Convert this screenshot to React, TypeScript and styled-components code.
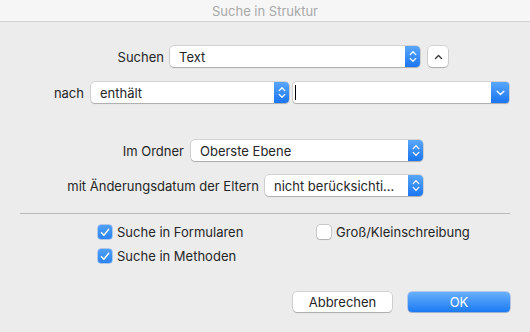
import React from "react";
import styled, { createGlobalStyle } from "styled-components";

const GlobalStyle = createGlobalStyle`
  html, body {
    margin: 0;
    padding: 0;
    background: #ececec;
  }
  body {
    font-family: Inter, "Liberation Sans", Arial, sans-serif;
    font-size: 13px;
    color: #262626;
  }
`;

const Window = styled.div`
  width: 530px;
  height: 332px;
  background: #ececec;
  display: flex;
  flex-direction: column;
  overflow: hidden;
`;

const TitleBar = styled.div`
  height: 22px;
  box-sizing: border-box;
  background: #f6f6f6;
  border-bottom: 1px solid #d1d1d1;
  display: flex;
  align-items: center;
  justify-content: center;
  color: #a9a9a9;
  font-size: 13px;
  padding-top: 1px;
`;

const Body = styled.div`
  display: flex;
  flex-direction: column;
`;

/* each row is right-aligned to where its control starts */
const Row = styled.div<{ $labelEnd: number; $top: number }>`
  display: grid;
  grid-template-columns: ${(p) => p.$labelEnd}px auto auto;
  align-items: center;
  height: 21px;
  margin-top: ${(p) => p.$top}px;
`;

const Label = styled.span`
  justify-self: end;
  white-space: nowrap;
`;

const Controls = styled.div<{ $gap: number }>`
  display: flex;
  align-items: center;
  margin-left: ${(p) => p.$gap}px;
`;

const PopUp = styled.div<{ $width: number }>`
  width: ${(p) => p.$width}px;
  height: 21px;
  box-sizing: border-box;
  background: #fff;
  border-radius: 4px;
  box-shadow: 0 0 0 0.5px rgba(0, 0, 0, 0.22), 0 1px 1px rgba(0, 0, 0, 0.18);
  display: flex;
  align-items: center;
  padding-left: 9px;
  overflow: hidden;
`;

const PopUpValue = styled.span`
  flex: 1;
  white-space: nowrap;
`;

const Stepper = styled.div<{ $width: number }>`
  width: ${(p) => p.$width}px;
  height: 100%;
  background: linear-gradient(#59a7fb, #1a75f1);
  display: flex;
  align-items: center;
  justify-content: center;
`;

const ComboBox = styled(PopUp)`
  border-radius: 3px;
  padding-left: 2px;
  margin-left: 4px;
`;

const Caret = styled.span`
  width: 1px;
  height: 15px;
  background: #000;
  flex: none;
`;

const ComboSpacer = styled.span`
  flex: 1;
`;

const SmallButton = styled.div`
  width: 20px;
  height: 21px;
  margin-left: 8px;
  box-sizing: border-box;
  background: #fff;
  border-radius: 4px;
  box-shadow: 0 0 0 0.5px rgba(0, 0, 0, 0.22), 0 1px 1px rgba(0, 0, 0, 0.18);
  display: flex;
  align-items: center;
  justify-content: center;
`;

const Separator = styled.div`
  height: 1px;
  background: #b9b9b9;
  margin: 17px 20px 0 20px;
`;

const Checks = styled.div`
  display: grid;
  grid-template-columns: 219px auto;
  row-gap: 10px;
  padding-left: 98px;
  margin-top: 11px;
`;

const CheckItem = styled.label`
  display: flex;
  align-items: center;
  height: 14px;
  white-space: nowrap;
`;

const Box = styled.span<{ $checked: boolean }>`
  width: 14px;
  height: 14px;
  box-sizing: border-box;
  border-radius: 3px;
  margin-right: 5px;
  display: flex;
  align-items: center;
  justify-content: center;
  background: ${(p) => (p.$checked ? "linear-gradient(#4fa0fa, #2b83f5)" : "#fff")};
  box-shadow: ${(p) =>
    p.$checked
      ? "0 0 0 0.5px rgba(30, 110, 230, 0.6)"
      : "0 0 0 0.5px rgba(0, 0, 0, 0.3), 0 1px 1px rgba(0, 0, 0, 0.12)"};
`;

const Buttons = styled.div`
  display: flex;
  justify-content: flex-end;
  gap: 16px;
  padding-right: 20px;
  margin-top: 29px;
`;

const PushButton = styled.div<{ $primary?: boolean; $width: number }>`
  width: ${(p) => p.$width}px;
  height: 20px;
  box-sizing: border-box;
  border-radius: 4px;
  display: flex;
  align-items: center;
  justify-content: center;
  background: ${(p) => (p.$primary ? "linear-gradient(#68b0fc, #1b7af3)" : "#fff")};
  color: ${(p) => (p.$primary ? "#fff" : "#262626")};
  box-shadow: ${(p) =>
    p.$primary
      ? "0 0 0 0.5px rgba(20, 100, 220, 0.5), 0 1px 1px rgba(0, 0, 0, 0.15)"
      : "0 0 0 0.5px rgba(0, 0, 0, 0.22), 0 1px 1px rgba(0, 0, 0, 0.18)"};
`;

const UpDown = () => (
  <svg width="8" height="13" viewBox="0 0 8 13" fill="none">
    <path d="M1.2 4.6 L4 1.8 L6.8 4.6" stroke="#fff" strokeWidth="1.3" strokeLinecap="round" strokeLinejoin="round" />
    <path d="M1.2 8.4 L4 11.2 L6.8 8.4" stroke="#fff" strokeWidth="1.3" strokeLinecap="round" strokeLinejoin="round" />
  </svg>
);

const Down = () => (
  <svg width="9" height="6" viewBox="0 0 9 6" fill="none">
    <path d="M1.2 1.3 L4.5 4.4 L7.8 1.3" stroke="#fff" strokeWidth="1.4" strokeLinecap="round" strokeLinejoin="round" />
  </svg>
);

const Up = () => (
  <svg width="9" height="6" viewBox="0 0 9 6" fill="none">
    <path d="M1.5 4.6 L4.5 1.6 L7.5 4.6" stroke="#3a3a3a" strokeWidth="1.4" strokeLinecap="round" strokeLinejoin="round" />
  </svg>
);

const Tick = () => (
  <svg width="10" height="9" viewBox="0 0 10 9" fill="none">
    <path d="M1.5 4.8 L3.9 7.3 L8.6 1.4" stroke="#fff" strokeWidth="1.5" strokeLinecap="round" strokeLinejoin="round" />
  </svg>
);

const Select = ({ value, width }: { value: string; width: number }) => (
  <PopUp $width={width}>
    <PopUpValue>{value}</PopUpValue>
    <Stepper $width={15}>
      <UpDown />
    </Stepper>
  </PopUp>
);

const Check = ({ label, checked }: { label: string; checked: boolean }) => (
  <CheckItem>
    <Box $checked={checked}>{checked && <Tick />}</Box>
    {label}
  </CheckItem>
);

export default function App() {
  return (
    <Window>
      <GlobalStyle />
      <TitleBar>Suche in Struktur</TitleBar>
      <Body>
        <Row $labelEnd={164} $top={24}>
          <Label>Suchen</Label>
          <Controls $gap={6}>
            <Select value="Text" width={250} />
            <SmallButton>
              <Up />
            </SmallButton>
          </Controls>
        </Row>
        <Row $labelEnd={84} $top={15}>
          <Label>nach</Label>
          <Controls $gap={7}>
            <Select value="enthält" width={198} />
            <ComboBox $width={216}>
              <Caret />
              <ComboSpacer />
              <Stepper $width={18}>
                <Down />
              </Stepper>
            </ComboBox>
          </Controls>
        </Row>
        <Row $labelEnd={184} $top={37}>
          <Label>Im Ordner</Label>
          <Controls $gap={7}>
            <Select value="Oberste Ebene" width={232} />
          </Controls>
        </Row>
        <Row $labelEnd={259} $top={14}>
          <Label>mit Änderungsdatum der Eltern</Label>
          <Controls $gap={6}>
            <Select value="nicht berücksichti..." width={158} />
          </Controls>
        </Row>
        <Separator />
        <Checks>
          <Check label="Suche in Formularen" checked />
          <Check label="Groß/Kleinschreibung" checked={false} />
          <Check label="Suche in Methoden" checked />
        </Checks>
        <Buttons>
          <PushButton $width={99}>Abbrechen</PushButton>
          <PushButton $width={102} $primary>
            OK
          </PushButton>
        </Buttons>
      </Body>
    </Window>
  );
}
